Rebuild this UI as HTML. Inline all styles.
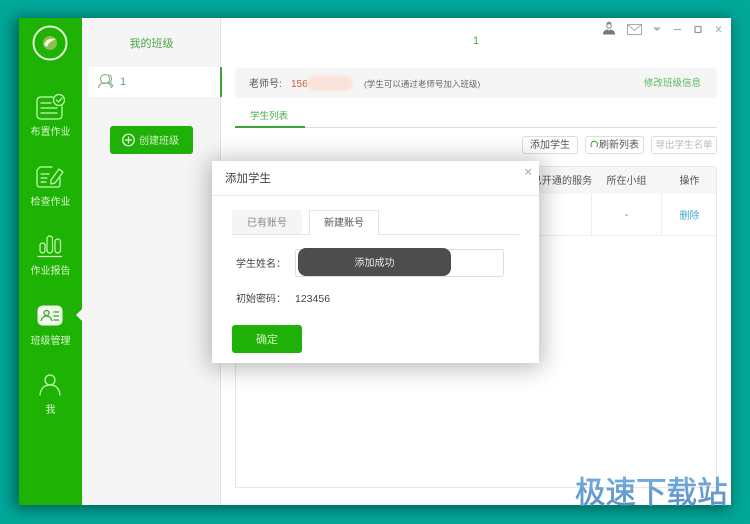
<!DOCTYPE html>
<html lang="zh"><head><meta charset="utf-8"><title>班级管理</title>
<style>
*{box-sizing:border-box;margin:0;padding:0}
html,body{width:750px;height:524px;overflow:hidden}
body{position:relative;background:#00a899;font-family:"Liberation Sans","Noto Sans CJK SC",sans-serif;font-size:10px;color:#444}
div,span{position:absolute;white-space:nowrap}
#app{left:0;top:0;width:750px;height:524px;filter:blur(.35px)}
#win{left:19px;top:18px;width:712px;height:487px;background:#fff;box-shadow:-3px 2px 14px 2px rgba(0,50,45,.6)}
#side{left:19px;top:18px;width:63px;height:487px;background:#1eb205}
#mid{left:82px;top:18px;width:139px;height:487px;background:#f5f5f5;border-right:1px solid #e2e2e2}
.nav{left:19px;width:63px;text-align:center;color:#d5f8c8;font-size:10px;line-height:12px}
svg{position:absolute;overflow:visible}
.btn{height:18px;top:136px;border:1px solid #ddd;border-radius:3px;background:#fff;text-align:center;line-height:18px;font-size:10px;color:#555}
.th{top:168px;height:27px;line-height:27px;font-size:10px;color:#555;text-align:center}
</style></head><body>
<div id="app">
<div id="win"></div><div id="side"></div><div id="mid"></div>

<svg style="left:0;top:0" width="750" height="524" fill="none">
<circle cx="50" cy="43" r="16.5" stroke="#e4fbd8" stroke-width="2"/>
<circle cx="50" cy="43" r="7" fill="#8fbf4a"/>
<path d="M44 45C46 39 50 38 56 39C52 41 49 42 47 47Z" fill="#eef5ea"/>
<g stroke="#c9fbb4" stroke-width="1.2" stroke-linecap="round" stroke-linejoin="round">
<path d="M53 97H41Q37 97 37 101V115Q37 119 41 119H58Q62 119 62 115V106"/>
<circle cx="59" cy="100" r="5.5"/><path d="M56.5 100L58.5 102L62 98"/>
<path d="M41 103H51M41 108H57M41 113H57"/>
<path d="M52 167H40L37 170V184Q37 187 40 187H58Q60 187 60 184V178"/>
<path d="M41 174H49M41 178H47M41 182H46"/>
<path d="M51 180L59 169L63 172L55 183L51 184Z"/>
<rect x="40" y="243" width="5" height="10" rx="2.5"/><rect x="47" y="236" width="5.5" height="17" rx="2.7"/><rect x="55" y="239" width="5.5" height="14" rx="2.7"/>
<path d="M38 256.500H61.500"/>
<circle cx="50" cy="380" r="5"/><path d="M40 395C41 387 45 385 50 385C55 385 59 387 60 395"/>
</g>
<rect x="37.500" y="305.500" width="25" height="20" rx="5" fill="#f1fbec"/>
<g stroke="#3c9d2c" stroke-width="1.2" fill="none"><circle cx="46.500" cy="313" r="2.5"/><path d="M41 321C42 317 44 316 46.500 316C49 316 51 317 52 321"/><path d="M53.500 312H59M53.500 316H59M53.500 320H59"/></g>
<path d="M82 309L76 315L82 321Z" fill="#f5f5f5"/>
</svg>
<div class="nav" style="top:127px">布置作业</div>
<div class="nav" style="top:197px">检查作业</div>
<div class="nav" style="top:266px">作业报告</div>
<div class="nav" style="top:336px">班级管理</div>
<div class="nav" style="top:405px">我</div>

<div style="left:82px;top:38px;width:139px;text-align:center;font-size:11px;line-height:13px;color:#4ea548">我的班级</div>
<div style="left:88px;top:67px;width:132px;height:30px;background:#fff"></div>
<div style="left:220px;top:67px;width:2px;height:30px;background:#3aa535"></div>
<svg style="left:0;top:0" width="240" height="100" fill="none" stroke="#7aab7a" stroke-width="1"><circle cx="105" cy="79" r="4.500"/><path d="M98.500 88C99 84 102 83 105 83C108 83 111 84 111.500 88"/><path d="M108.500 75C112 75 112.500 81 109.500 82.500C111.500 83 112.500 85 112.800 87"/></svg>
<div style="left:120px;top:75px;font-size:11px;line-height:14px;color:#5fa55f">1</div>
<div style="left:110px;top:126px;width:83px;height:28px;background:#1fb108;border-radius:3px"></div>
<svg style="left:0;top:0" width="200" height="160" fill="none" stroke="#e6fbdc" stroke-width="1.200"><circle cx="128.500" cy="140" r="5.800"/><path d="M125 140H132M128.500 136.500V143.500"/></svg>
<div style="left:139px;top:135px;font-size:10px;line-height:13px;color:#cdf5c2">创建班级</div>

<div style="left:473px;top:34px;font-size:11px;line-height:14px;color:#4aa54a">1</div>
<svg style="left:0;top:0" width="750" height="60" fill="none">
<path d="M609 21.500C607 22 606.500 23 606.500 24H611.500C611.500 23 611 22 609 21.500Z" fill="#888"/><circle cx="609" cy="26" r="2.300" fill="#fff" stroke="#888"/>
<path d="M603 34.500C603 31 605 30 608 29.500L609 31L610 29.500C613 30 615 31 615 34.500Z" fill="#777"/>
<rect x="627.500" y="24.500" width="14" height="10" fill="#fff" stroke="#aaa"/><path d="M627.500 24.500L634.500 30.500L641.500 24.500" stroke="#aaa"/>
<path d="M653 27.500H661L657 31Z" fill="#aaa"/>
<path d="M674 29.500H681" stroke="#aaa" stroke-width="1.200"/>
<rect x="695" y="26.500" width="6" height="6" rx="1" stroke="#999" stroke-width="1.300"/>
<path d="M716 26.500L721 32M721 26.500L716 32" stroke="#aaa"/>
</svg>

<div style="left:235px;top:68px;width:482px;height:30px;background:#f5f5f5;border-radius:3px"></div>
<div style="left:249px;top:78px;font-size:10px;line-height:13px;color:#555">老师号:</div>
<div style="left:291px;top:78px;font-size:10px;line-height:13px;color:#d4573c">156</div>
<div style="left:307px;top:76px;width:46px;height:15px;border-radius:8px;background:#fbe3dc;filter:blur(1px)"></div>
<div style="left:364px;top:78px;font-size:8.500px;line-height:12px;color:#666">(学生可以通过老师号加入班级)</div>
<div style="left:644px;top:77px;font-size:9.500px;line-height:13px;color:#5cb75c">修改班级信息</div>

<div style="left:250px;top:110px;font-size:9.500px;line-height:13px;color:#4eb04e">学生列表</div>
<div style="left:235px;top:127px;width:482px;height:1px;background:#ddd"></div>
<div style="left:235px;top:126px;width:70px;height:2px;background:#3aa535"></div>

<div class="btn" style="left:522px;width:56px">添加学生</div>
<div class="btn" style="left:585px;width:59px;padding-left:9px">刷新列表</div>
<svg style="left:0;top:0" width="620" height="155" fill="none" stroke="#3aa535"><path d="M592 147A3.300 3.300 0 1 1 596.500 147"/></svg>
<div class="btn" style="left:651px;width:66px;color:#bbb;font-size:9.500px">导出学生名单</div>

<div style="left:235px;top:166px;width:482px;height:322px;border:1px solid #e8e8e8;border-radius:3px 3px 0 0"></div>
<div style="left:236px;top:167px;width:480px;height:27px;background:#f6f6f6;border-radius:3px 3px 0 0"></div>
<div style="left:236px;top:235px;width:480px;height:1px;background:#eee"></div>
<div style="left:591px;top:194px;width:1px;height:41px;background:#eee"></div>
<div style="left:661px;top:194px;width:1px;height:41px;background:#eee"></div>
<div class="th" style="left:530px;width:64px;letter-spacing:.100px">已开通的服务</div>
<div class="th" style="left:592px;width:69px">所在小组</div>
<div class="th" style="left:662px;width:55px">操作</div>
<div style="left:592px;top:209px;width:69px;text-align:center;font-size:10px;line-height:13px;color:#777">-</div>
<div style="left:662px;top:210px;width:55px;text-align:center;font-size:10px;line-height:13px;color:#45a7cf">删除</div>

<div style="left:212px;top:161px;width:327px;height:202px;background:#fff;box-shadow:0 2px 22px 3px rgba(0,0,0,.28)"></div>
<div style="left:225px;top:172px;font-size:11.500px;line-height:15px;color:#444">添加学生</div>
<div style="left:212px;top:195px;width:327px;height:1px;background:#e8e8e8"></div>
<svg style="left:0;top:0" width="540" height="180" fill="none" stroke="#aaa" stroke-width="1.100"><path d="M525.500 169L531 174.500M531 169L525.500 174.500"/></svg>
<div style="left:232px;top:210px;width:70px;height:24px;background:#f5f5f5;text-align:center;line-height:27px;font-size:10px;color:#888">已有账号</div>
<div style="left:232px;top:234px;width:287px;height:1px;background:#e3e3e3"></div>
<div style="left:309px;top:210px;width:70px;height:25px;background:#fff;border:1px solid #e3e3e3;border-bottom:none;text-align:center;line-height:26px;font-size:10px;color:#555">新建账号</div>
<div style="left:236px;top:258px;font-size:10px;line-height:13px;color:#444">学生姓名：</div>
<div style="left:295px;top:249px;width:209px;height:28px;border:1px solid #ddd;border-radius:3px;background:#fff"></div>
<div style="left:298px;top:248px;width:153px;height:28px;background:#4d4d4d;border-radius:8px;text-align:center;line-height:31px;font-size:10px;color:#e8e8e8">添加成功</div>
<div style="left:236px;top:293px;font-size:10px;line-height:13px;color:#444">初始密码：</div>
<div style="left:295px;top:292px;font-size:10.500px;line-height:14px;color:#444">123456</div>
<div style="left:232px;top:325px;width:70px;height:28px;background:#1fb108;border-radius:3px;text-align:center;line-height:30px;font-size:11px;color:#c9f5be">确定</div>

<div style="left:575px;top:475px;font-size:30.500px;line-height:36px;font-weight:400;-webkit-text-stroke:.5px #6a9ed4;letter-spacing:0;background:linear-gradient(#74b2e2,#5a86c0);-webkit-background-clip:text;background-clip:text;color:transparent">极速下载站</div>
</div>
</body></html>
